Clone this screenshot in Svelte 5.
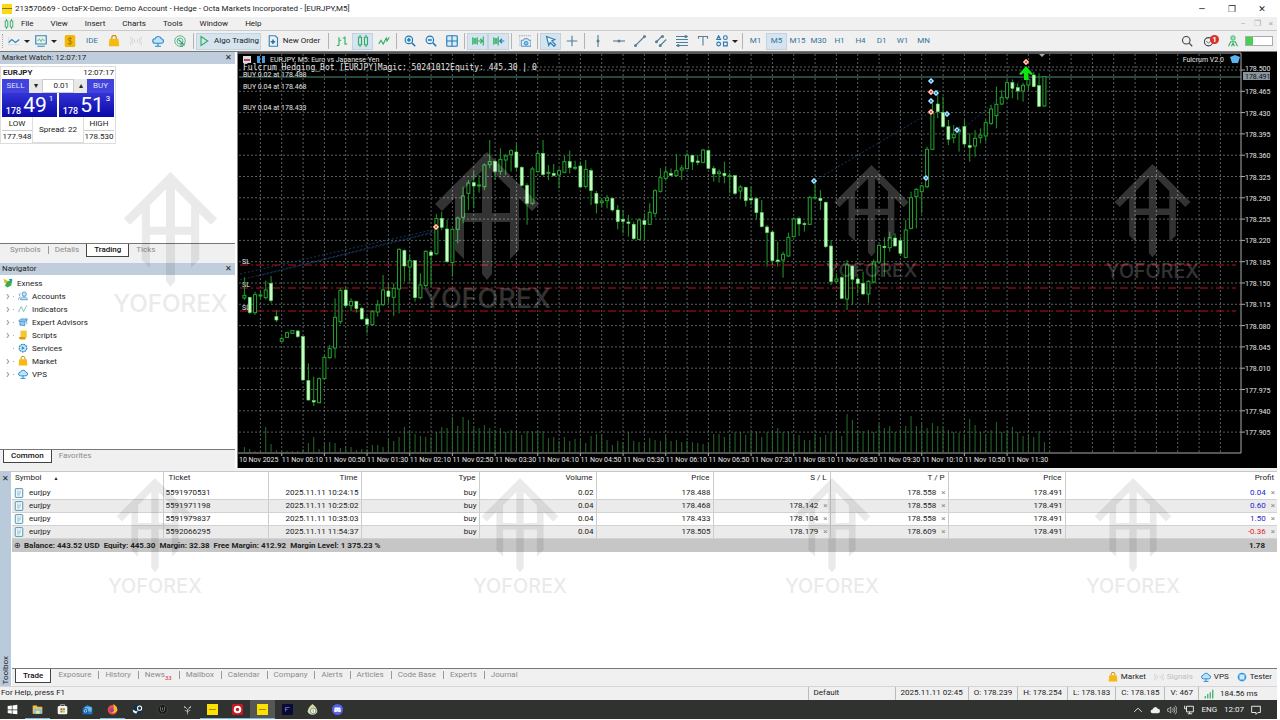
<script lang="ts">
  // Trading terminal: market watch, navigator, chart and trade toolbox.
  type Bar = [number, number, number, number, number];

  const menus = ['File', 'View', 'Insert', 'Charts', 'Tools', 'Window', 'Help'];
  const toolGroups = [
    ['algo'],
    ['bars', 'candles', 'line'],
    ['zoomin', 'zoomout', 'tile'],
    ['scroll', 'shift'],
    ['camera'],
    ['cursor', 'cross'],
  ];
  const drawTools = ['vline', 'hline', 'trend', 'channel', 'fibo', 'text'];
  const pressed = ['candles', 'scroll', 'shift', 'cursor'];
  const frames = ['M1', 'M5', 'M15', 'M30', 'H1', 'H4', 'D1', 'W1', 'MN'];

  const tree = [
    { name: 'Accounts', icon: 'people', open: true },
    { name: 'Indicators', icon: 'wave', open: true },
    { name: 'Expert Advisors', icon: 'hat', open: true },
    { name: 'Scripts', icon: 'script', open: true },
    { name: 'Services', icon: 'gear', open: false },
    { name: 'Market', icon: 'bag', open: true },
    { name: 'VPS', icon: 'cloud', open: true },
  ];

  const columns = [
    { name: 'Symbol', width: 151 },
    { name: 'Ticket', width: 105 },
    { name: 'Time', width: 93 },
    { name: 'Type', width: 118 },
    { name: 'Volume', width: 117 },
    { name: 'Price', width: 117 },
    { name: 'S / L', width: 117 },
    { name: 'T / P', width: 118 },
    { name: 'Price', width: 117 },
    { name: 'Profit', width: 212 },
  ];
  const trades = [
    { ticket: '5591970531', time: '2025.11.11 10:24:15', volume: '0.02', price: '178.488', sl: '', tp: '178.558', profit: '0.04' },
    { ticket: '5591971198', time: '2025.11.11 10:25:02', volume: '0.04', price: '178.468', sl: '178.142', tp: '178.558', profit: '0.60' },
    { ticket: '5591979837', time: '2025.11.11 10:35:03', volume: '0.04', price: '178.433', sl: '178.104', tp: '178.558', profit: '1.50' },
    { ticket: '5592066295', time: '2025.11.11 11:54:37', volume: '0.04', price: '178.505', sl: '178.179', tp: '178.609', profit: '-0.36' },
  ];
  const toolboxTabs = ['Trade', 'Exposure', 'History', 'News', 'Mailbox', 'Calendar', 'Company', 'Alerts', 'Articles', 'Code Base', 'Experts', 'Journal'];
  const quote = ['2025.11.11 02:45', 'O: 178.239', 'H: 178.254', 'L: 178.183', 'C: 178.185', 'V: 467'];
  const apps = ['windows', 'folder', 'store', 'mail', 'firefox', 'steam', 'hex', 'plant', 'exness', 'octa', 'exness', 'night', 'coin', 'discord'];
  const runningApps = [1, 4, 8, 9, 10];

  // Chart geometry: 5.33 units a bar, a grid line every 4 bars.
  const STEP = 16 / 3;
  const barX = (i: number) => 6.4 + i * STEP;
  const barY = (v: number) => 88 + v / 3;

  // high, body top, body bottom, low, 1 = rising
  const bars: Bar[] = [
    [412,466,474,480,1],[470,472,518,522,0],[455,464,518,525,1],[452,465,468,475,1],[422,450,473,478,1],[408,430,482,490,0],
    [512,530,540,546,0],[590,596,604,606,1],[575,578,592,594,1],[570,572,580,582,1],[570,573,590,594,0],[588,590,720,722,0],
    [670,722,780,782,0],[710,782,786,798,0],[712,716,788,790,1],[645,652,716,720,1],[615,626,653,656,1],[475,532,624,655,1],
    [445,451,545,552,1],[440,450,497,503,0],[475,484,497,514,1],[482,484,506,518,0],[500,505,537,540,0],[530,537,553,580,0],
    [510,515,554,556,1],[480,495,516,530,1],[405,450,494,498,1],[432,453,470,486,0],[430,445,472,528,1],[325,328,447,520,1],
    [328,332,378,425,0],[345,362,381,425,1],[360,362,473,485,0],[400,435,473,478,1],[330,334,437,445,1],[330,336,346,440,0],
    [222,236,341,345,1],[215,235,262,270,0],[240,267,365,368,0],[265,268,368,410,1],[230,234,268,310,1],[140,168,232,250,1],
    [120,129,160,210,1],[95,128,138,205,0],[105,135,138,158,1],[70,75,140,150,1],[0,65,74,85,1],[60,64,94,120,0],
    [25,58,94,105,1],[42,48,60,105,1],[28,32,44,95,1],[10,36,82,90,0],[78,82,136,140,0],[130,136,190,254,0],
    [80,87,190,195,1],[35,40,95,98,1],[0,40,104,108,0],[75,97,100,120,1],[72,100,106,110,0],[85,92,105,145,1],
    [48,65,97,100,1],[32,65,83,100,0],[62,82,85,90,1],[65,78,141,145,0],[60,88,139,145,1],[85,92,152,195,0],
    [153,160,190,220,0],[175,183,188,200,1],[165,174,182,205,1],[173,175,210,215,0],[195,210,245,268,0],[210,238,244,280,0],
    [225,246,250,290,0],[245,253,296,300,0],[235,240,298,300,1],[220,242,254,300,0],[190,217,253,255,1],[148,152,220,232,1],
    [85,113,154,158,1],[82,96,115,122,1],[85,100,106,108,0],[42,92,107,110,1],[75,84,90,120,1],[38,46,86,88,1],
    [44,46,66,90,0],[45,63,67,75,0],[27,30,67,70,1],[28,32,85,88,0],[78,86,102,125,0],[88,96,101,128,1],
    [65,100,107,130,0],[98,107,110,160,1],[105,107,160,165,0],[135,141,153,178,1],[140,142,182,200,0],[140,176,180,195,0],
    [173,176,218,238,0],[180,218,260,263,0],[255,261,278,380,0],[273,276,362,375,0],[305,360,364,380,0],[335,343,360,413,1],
    [278,292,348,350,1],[232,237,290,292,1],[230,236,252,288,0],[245,251,254,275,0],[168,173,253,255,1],[122,172,174,176,1],
    [150,175,182,210,0],[184,187,320,324,0],[300,318,425,435,0],[400,417,424,432,1],[408,413,475,478,0],[360,375,477,510,1],
    [375,378,418,495,0],[410,417,430,460,0],[395,430,462,466,0],[420,424,462,490,1],[358,366,426,430,1],[313,316,366,370,1],
    [292,319,323,410,0],[275,293,323,335,1],[280,294,318,320,0],[290,302,340,348,0],[240,270,352,355,1],[155,173,265,268,1],
    [145,148,170,265,1],[135,138,155,220,1],[20,28,140,145,1],[-120,-80,28,30,1],[-150,-108,-85,-65,0],[-130,-83,-40,-38,0],
    [-60,-40,-2,15,0],[-45,-16,-7,10,1],[-40,-30,-25,35,1],[-60,-40,12,20,0],[-20,17,22,65,0],[-30,-5,18,50,1],
    [-35,-15,-7,10,1],[-60,-52,-12,5,1],[-105,-93,-50,-45,1],[-160,-107,-73,-35,1],[-150,-128,-108,-105,1],[-180,-172,-127,-122,1],
    [-182,-172,-155,-125,0],[-170,-157,-147,-120,0],[-172,-164,-147,-115,1],[-190,-182,-165,-150,1],[-205,-195,-160,-158,0],
    [-200,-163,-101,-99,0],[-192,-190,-102,-100,1],
  ];
  const volumes = [
    5,3,1,2,25,8,2,1,1,1,1,3,9,15,3,9,10,9,4,5,5,2,3,3,7,7,5,14,11,15,25,20,18,16,15,15,20,25,24,35,26,35,32,26,24,27,24,22,
    24,20,22,20,17,21,21,21,21,14,15,11,15,11,13,12,9,16,18,18,12,7,11,10,20,11,10,9,14,12,11,16,11,12,10,11,10,9,8,10,18,18,
    15,18,20,20,17,20,21,15,20,20,24,20,21,18,17,12,12,18,15,17,20,20,16,38,32,22,21,22,20,28,24,26,20,23,26,36,26,28,24,29,
    26,25,22,20,19,17,33,27,20,18,22,30,20,21,25,20,16,17,15,21,10,
  ];
  const gridX = Array.from({ length: 46 }, (_, i) => 22.4 + i * 4 * STEP);
  const gridY = Array.from({ length: 18 }, (_, i) => 18 + i * 21.3);
  const prices = gridY.map((_, i) => (178.5 - i * 0.035).toFixed(3));
  const times = Array.from({ length: 18 }, (_, i) => {
    const min = 10 + i * 40;
    const pad = (n: number) => String(n).padStart(2, '0');
    return `11 Nov ${pad(Math.floor(min / 60))}:${pad(min % 60)}`;
  });
  const stops = [
    { y: 213, label: 'SL' },
    { y: 236, label: 'SL' },
    { y: 259, label: 'SL' },
  ];
  const deals = [
    { x: 198, y: 175, sell: true }, { x: 576, y: 129 }, { x: 688, y: 126 }, { x: 693, y: 29 }, { x: 693, y: 40, sell: true },
    { x: 698, y: 41 }, { x: 693, y: 49 }, { x: 693, y: 60, sell: true }, { x: 709, y: 62 }, { x: 719, y: 78 }, { x: 788, y: 10, sell: true },
  ];
</script>

{#snippet icon(name: string)}
  <svg class="icon" viewBox="0 0 16 16" aria-hidden="true">
    {#if name === 'chart'}
      <path d="M1 3v10h14" stroke="#c9d3da" /><path d="M1 10l4-4 5 4 5-4" stroke="#2f86b5" stroke-width="1.500" />
    {:else if name === 'monitor'}
      <path d="M1 1h14v11H1zM3 15h10" stroke="#2f86b5" stroke-width="1.500" /><path d="M3 7h2l1-2 2 4 2-4 1 2h2" stroke="#36b37a" />
    {:else if name === 'dollar'}
      <rect x="1" y="0" width="14" height="16" rx="2" fill="#f3b90a" /><path d="M10.500 5C9 3.500 5.500 4 5.500 6s5 1.500 5 4-4 2.500-5.500 1M8 2.500v11" stroke="#9b6800" />
    {:else if name === 'bag'}
      <path d="M5 6V3.500a3 3 0 016 0V6" stroke="#c48d00" stroke-width="1.500" /><path d="M2 5h12l1 10H1z" fill="#f5b912" />
    {:else if name === 'signal'}
      <path d="M4 4a6 6 0 000 8M12 4a6 6 0 010 8M1.500 2.500a9 9 0 000 11M14.500 2.500a9 9 0 010 11M6.500 6a3 3 0 000 4M9.500 6a3 3 0 010 4" stroke="#c3c7ca" />
    {:else if name === 'cloud'}
      <path d="M4 11a3 3 0 010-6 4.500 4.500 0 018.500 0A3 3 0 0112 11z" fill="#bfe3fa" stroke="#2688c9" stroke-width="1.500" /><path d="M8 11v4M4 15h8" stroke="#2688c9" stroke-width="1.500" />
    {:else if name === 'globe'}
      <circle cx="8" cy="8" r="7" stroke="#2ea36c" /><circle cx="8" cy="8" r="4" stroke="#2ea36c" /><path d="M8 8l6 6M8 12h6M8 15h4M8 8l-2-2" stroke="#2ea36c" stroke-width="1.500" />
    {:else if name === 'play'}
      <path d="M4 2l9 6-9 6z" stroke="#2eaf62" stroke-width="1.500" />
    {:else if name === 'order'}
      <path d="M3 1h8l3 3v11H3z" stroke="#2f86b5" stroke-width="1.500" /><path d="M8 6v6M5 9h6" stroke="#1d6fae" stroke-width="2" />
    {:else if name === 'bars'}
      <path d="M4 3v11M1 14h3M4 7h3M12 2v11M9 4h3M12 12h3" stroke="#2eaf62" stroke-width="1.500" />
    {:else if name === 'candles'}
      <path d="M2 3h4v10H2zM10 3h4v10h-4zM4 0v3M4 13v3M12 0v3M12 13v3" stroke="#2eaf62" stroke-width="1.500" />
    {:else if name === 'line'}
      <path d="M1 12l3-5 3 5 4-8 1 4 3-5" stroke="#2eaf62" stroke-width="1.500" />
    {:else if name === 'zoomin'}
      <circle cx="6.500" cy="6.500" r="5" fill="#d8ecfa" stroke="#2678b5" stroke-width="1.500" /><path d="M10.500 10.500L15 15M4 6.500h5M6.500 4v5" stroke="#2678b5" stroke-width="2" />
    {:else if name === 'zoomout'}
      <circle cx="6.500" cy="6.500" r="5" fill="#d8ecfa" stroke="#2678b5" stroke-width="1.500" /><path d="M10.500 10.500L15 15M4 6.500h5" stroke="#2678b5" stroke-width="2" />
    {:else if name === 'tile'}
      <rect x="1" y="1" width="14" height="14" rx="1" fill="#d8ecfa" stroke="#2678b5" stroke-width="1.500" /><path d="M8 1v14M1 8h14" stroke="#2678b5" stroke-width="1.500" />
    {:else if name === 'scroll'}
      <path d="M1 3v10M3 5h2v6H3zM7 3v10M15 2v12" stroke="#2eaf62" stroke-width="1.500" /><path d="M8 8h6M11 5l3 3-3 3" stroke="#2eaf62" stroke-width="1.500" />
    {:else if name === 'shift'}
      <path d="M1 3v10M3 5h2v6H3zM7 2v12" stroke="#2eaf62" stroke-width="1.500" /><path d="M15 8H9M12 5L9 8l3 3" stroke="#2678b5" stroke-width="1.500" />
    {:else if name === 'camera'}
      <path d="M0 1h16M0 1v14" stroke="#8d959b" stroke-dasharray="2 1" /><path d="M3 7h3l1-2h5l1 2h3v8H3z" fill="#d8ecfa" stroke="#2678b5" /><circle cx="9.500" cy="11" r="2.500" fill="#8cc6ee" stroke="#2678b5" />
    {:else if name === 'cursor'}
      <path d="M2 2l11 4-4 2 5 5-2 2-5-5-2 4z" fill="#eef7fd" stroke="#2678b5" stroke-width="1.500" />
    {:else if name === 'cross'}
      <path d="M8 1v14M1 8h14" stroke="#4b7f9c" stroke-width="1.500" />
    {:else if name === 'vline'}
      <path d="M8 0v16" stroke="#5c7f93" stroke-width="1.500" /><circle cx="8" cy="8" r="2" fill="#5c7f93" />
    {:else if name === 'hline'}
      <path d="M0 8h16" stroke="#5c7f93" stroke-width="1.500" /><circle cx="8" cy="8" r="2" fill="#5c7f93" />
    {:else if name === 'trend'}
      <path d="M2 14L14 2" stroke="#5c7f93" stroke-width="1.500" /><circle cx="2" cy="14" r="2" fill="#5c7f93" /><circle cx="14" cy="2" r="2" fill="#5c7f93" />
    {:else if name === 'channel'}
      <path d="M1 10L10 1M6 15l9-9" stroke="#5c7f93" stroke-width="1.500" /><circle cx="2" cy="9" r="2" fill="#5c7f93" /><circle cx="7" cy="14" r="2" fill="#5c7f93" /><circle cx="10" cy="2" r="2" fill="#5c7f93" />
    {:else if name === 'fibo'}
      <path d="M0 2h16M0 6h16M0 10h16M0 14h16" stroke="#4b7f9c" stroke-width="1.500" /><circle cx="3" cy="14" r="2" fill="#5c7f93" /><circle cx="13" cy="2" r="2" fill="#5c7f93" />
    {:else if name === 'text'}
      <path d="M2 5V2h12v3M8 2v12" stroke="#5c7f93" stroke-width="1.500" />
    {:else if name === 'shapes'}
      <path d="M3.500 1L6 6H1zM10 9.500h5v5h-5z" stroke="#2678b5" stroke-width="1.500" /><circle cx="3.500" cy="12" r="2.500" stroke="#2678b5" stroke-width="1.500" /><circle cx="12.500" cy="3.500" r="2.500" stroke="#2678b5" stroke-width="1.500" />
    {:else if name === 'people'}
      <circle cx="10" cy="5" r="3.500" fill="#bfe3fa" stroke="#2678b5" /><path d="M4 14c0-6 11-6 11 0z" fill="#bfe3fa" stroke="#2678b5" /><path d="M1 14c0-3 1-4 3-4M4 4a2 2 0 100 4" stroke="#2678b5" />
    {:else if name === 'wave'}
      <path d="M1 13l4-9 4 8 5-10" stroke="#36a98a" />
    {:else if name === 'hat'}
      <path d="M1 6l4-3h10l-3 4H2zM3 7v6l8 1V8M14 4v7" fill="#8cccf2" stroke="#2678b5" />
    {:else if name === 'script'}
      <path d="M4 1h10v11H4z" fill="#f7c52c" /><path d="M1 11h11v4H3z" fill="#d99b08" />
    {:else if name === 'gear'}
      <circle cx="8" cy="8" r="6" fill="#d2ecfb" stroke="#2688c9" stroke-width="2" stroke-dasharray="3 1" /><path d="M6 5l5 3-5 3z" fill="#2688c9" />
    {:else if name === 'doc'}
      <rect x="2" y="1" width="12" height="14" rx="1" fill="#eef8fd" stroke="#4b91ad" stroke-width="1.500" /><path d="M5 5h2M9 5h2M5 8h6M5 11h4" stroke="#4b91ad" />
    {:else if name === 'tester'}
      <circle cx="8" cy="8" r="7" fill="#2f9bdc" /><rect x="4" y="4" width="8" height="8" rx="1" fill="#cdeafb" />
    {:else if name === 'search'}
      <circle cx="7" cy="7" r="5" stroke="#444" stroke-width="1.500" /><path d="M11 11l4 4" stroke="#444" stroke-width="1.500" />
    {:else if name === 'bell'}
      <circle cx="6" cy="9" r="5.500" stroke="#444" stroke-width="1.500" /><path d="M3 8l3 3 3-3" stroke="#444" />
    {:else if name === 'person'}
      <circle cx="8" cy="4" r="3" fill="#9be0b3" stroke="#2eaf62" /><path d="M2 15l3-6h6l3 6M6 15l2-4 2 4" stroke="#2eaf62" stroke-width="1.500" />
    {:else if name === 'windows'}
      <path d="M1 3l6-1v6H1zM8 2l7-1v7H8zM1 9h6v5l-6-1zM8 9h7v6l-7-1z" fill="#fff" />
    {:else if name === 'folder'}
      <path d="M1 2h6l1 2h7v10H1z" fill="#f2c14a" /><path d="M3 7h11v7H3z" fill="#7fc6e8" /><path d="M6 10h5v4H6z" fill="#f8e3a1" />
    {:else if name === 'store'}
      <rect x="1" y="3" width="14" height="12" rx="2" fill="#f4f4f0" /><path d="M5 3V1h6v2" stroke="#ddd" /><path d="M5 6h3v3H5z" fill="#e25a3c" /><path d="M8.500 6h3v3h-3zM5 9.500h3v3H5z" fill="#64a844" /><path d="M8.500 9.500h3v3h-3z" fill="#efb62e" />
    {:else if name === 'mail'}
      <path d="M1 6l7-5 7 5v9H1z" fill="#1f78c8" /><path d="M4 4h10v7H4z" fill="#6cb9ef" /><circle cx="5" cy="10" r="4" fill="#0c5daa" /><circle cx="5" cy="10" r="2" stroke="#fff" />
    {:else if name === 'firefox'}
      <circle cx="8" cy="8.500" r="7" fill="#ef4a38" /><path d="M9 0c5 3 6 5 6 9-2 5-8 5-10 2 4 0 6-3 4-11z" fill="#fdb62f" /><circle cx="7" cy="9" r="3" fill="#8a3fc0" />
    {:else if name === 'steam'}
      <circle cx="8" cy="8" r="7" fill="#16324a" /><circle cx="11" cy="6" r="3" stroke="#fff" stroke-width="1.500" /><path d="M1 8l5 3 3-2-3 5-4-2z" fill="#fff" />
    {:else if name === 'hex'}
      <circle cx="8" cy="8" r="7" fill="#161616" stroke="#555" /><path d="M5 4v5l3 3 3-3V4M8 5v4" stroke="#999" />
    {:else if name === 'plant'}
      <path d="M8 15V8L3 3M8 9l5-6M4 9l4 2 4-2M3 5h3M10 5h3" stroke="#d6d6d6" />
    {:else if name === 'exness'}
      <rect width="16" height="16" fill="#fde100" /><path d="M3 8h10" stroke="#6d6100" />
    {:else if name === 'octa'}
      <rect width="16" height="16" rx="2" fill="#c91820" /><circle cx="8" cy="8" r="4" stroke="#fff" stroke-width="3" />
    {:else if name === 'night'}
      <rect width="16" height="16" rx="1" fill="#090a35" /><path d="M5 11V5h6M5 8h3" stroke="#8991d4" />
    {:else if name === 'coin'}
      <path d="M8 0c4 3 7 7 7 11 0 6-14 6-14 0C1 7 4 3 8 0z" fill="#ddd9a4" /><circle cx="9" cy="10" r="4" fill="#f7f7ef" stroke="#467f69" /><path d="M9 8v4" stroke="#467f69" />
    {:else if name === 'discord'}
      <circle cx="8" cy="8" r="8" fill="#5662ea" /><path d="M4 5h8l1 6-3 1-1-1H7l-1 1-3-1z" fill="#fff" /><path d="M6 8v1M10 8v1" stroke="#5662ea" stroke-width="1.500" />
    {:else if name === 'up'}
      <path d="M2 11l6-6 6 6" stroke="#eee" stroke-width="1.500" />
    {:else if name === 'weather'}
      <path d="M4 13a3 3 0 010-6 4.500 4.500 0 018.500-1 3.500 3.500 0 010 7z" fill="#eee" />
    {:else if name === 'sound'}
      <path d="M1 6h2l3-3v10l-3-3H1zM9 5a5 5 0 010 6M11 3a8 8 0 010 10M13 1a11 11 0 010 14" stroke="#eee" />
    {:else if name === 'network'}
      <path d="M4 2h11v9H4zM9 11v3M6 14h7M1 1v5h3" stroke="#eee" stroke-width="1.500" />
    {:else if name === 'note'}
      <path d="M1 2h14v10h-4l-3 3v-3H1z" stroke="#eee" stroke-width="1.500" />
    {/if}
  </svg>
{/snippet}

{#snippet watermark(place: string)}
  <svg class="mark {place}" viewBox="-6 0 144 168" aria-hidden="true">
    <path d="M66 0l52 52-7 7-13-13v52l-9 9V37L71 19v42h18v9H71v52l-5 6-5-6V70H43v-9h18V19L43 37v70l-9-9V46L21 59l-7-7z" />
    <text x="66" y="156" text-anchor="middle">YOFOREX</text>
  </svg>
{/snippet}

<div class="terminal">
  <header class="title">
    <span class="logo"></span>
    <h1>213570669 - OctaFX-Demo: Demo Account - Hedge - Octa Markets Incorporated - [EURJPY,M5]</h1>
    <div class="window-buttons">
      <button aria-label="Minimize">─</button>
      <button aria-label="Restore">❐</button>
      <button aria-label="Close">✕</button>
    </div>
  </header>

  <nav class="menu">
    {@render icon('candles')}
    {#each menus as item (item)}
      <button>{item}</button>
    {/each}
    <div class="child-buttons"><span>–</span><span>❐</span><span>×</span></div>
  </nav>

  <div class="toolbar">
    <span class="grip"></span>
    <button class="tool drop" aria-label="Chart type">{@render icon('chart')}<i></i></button>
    <button class="tool drop" aria-label="Templates">{@render icon('monitor')}<i></i></button>
    <button class="tool app" aria-label="Deposit">{@render icon('dollar')}</button>
    <button class="tool app ide">IDE</button>
    {#each ['bag', 'signal', 'cloud', 'globe'] as name (name)}
      <button class="tool app" aria-label={name}>{@render icon(name)}</button>
    {/each}
    {#each toolGroups as group, g (g)}
      <span class="sep"></span>
      {#each group as name (name)}
        {#if name === 'algo'}
          <button class="tool label on">{@render icon('play')}Algo Trading</button>
          <button class="tool label">{@render icon('order')}New Order</button>
        {:else}
          <button class="tool" class:on={pressed.includes(name)} aria-label={name}>{@render icon(name)}</button>
        {/if}
      {/each}
    {/each}
    <span class="sep"></span>
    {#each drawTools as name (name)}
      <button class="tool" aria-label={name}>{@render icon(name)}</button>
    {/each}
    <button class="tool drop" aria-label="Objects">{@render icon('shapes')}<i></i></button>
    <span class="sep"></span>
    {#each frames as frame (frame)}
      <button class="tool frame" class:on={frame === 'M5'}>{frame}</button>
    {/each}
    <div class="tool-end">
      <button class="tool" aria-label="Search">{@render icon('search')}</button>
      <button class="tool alert" aria-label="Notifications">{@render icon('bell')}<b>1</b></button>
      <button class="tool" aria-label="Account">{@render icon('person')}</button>
      <span class="battery"></span>
    </div>
  </div>

  <main class="work">
    <aside class="side">
      <section class="watch">
        <div class="pane-head"><h2>Market Watch: 12:07:17</h2><button aria-label="Close market watch">✕</button></div>
        <div class="ticket">
          <div class="ticket-head"><b>EURJPY</b><span>12:07:17</span></div>
          <div class="lot">
            <button class="deal">SELL</button>
            <button class="spin" aria-label="Less">▾</button>
            <input aria-label="Volume" value="0.01" />
            <button class="spin" aria-label="More">▴</button>
            <button class="deal">BUY</button>
          </div>
          <div class="quotes">
            <div class="quote"><small>178</small><strong>49</strong><sup>1</sup></div>
            <div class="quote"><small>178</small><strong>51</strong><sup>3</sup></div>
          </div>
          <div class="range">
            <div><span>LOW</span><span>177.948</span></div>
            <div class="spread">Spread: 22</div>
            <div><span>HIGH</span><span>178.530</span></div>
          </div>
        </div>
        <div class="tabs">
          <button>Symbols</button><button>Details</button><button class="active">Trading</button><button>Ticks</button>
        </div>
      </section>
      <section class="navigator">
        <div class="pane-head"><h2>Navigator</h2><button aria-label="Close navigator">✕</button></div>
        <ul class="tree">
          <li class="root">
            <svg class="icon" viewBox="0 0 16 16" aria-hidden="true">
              <path d="M1 1l6 3v6L2 7z" fill="#e9bd20" /><path d="M7 5l8-2-2 9-6 3-4-3z" fill="#35ae4d" /><path d="M9 2l6-1-2 5z" fill="#2583c4" />
            </svg>
            Exness
          </li>
          {#each tree as node (node.name)}
            <li><span class="chevron">{node.open ? '›' : ''}</span><span class="dash"></span>{@render icon(node.icon)}{node.name}</li>
          {/each}
        </ul>
        <div class="tabs"><button class="active">Common</button><button>Favorites</button></div>
      </section>
      {@render watermark('in-side')}
    </aside>

    <section class="chart">
      <svg class="plot" viewBox="0 0 1039 415" preserveAspectRatio="xMinYMin meet" role="img" aria-label="EURJPY, M5">
        <g class="grid">
          {#each gridX as x (x)}<path d="M{x} 2V400" />{/each}
          {#each gridY as y (y)}<path d="M1 {y}H1003" />{/each}
          <path d="M290 15H1003" />
        </g>
        <g class="stops">
          {#each stops as stop (stop.y)}
            <path d="M2 {stop.y}H998" />
            <text x="4" y={stop.y - 1}>{stop.label}</text>
          {/each}
        </g>
        <g class="links">
          <path d="M2 228L198 179M2 222L198 177M20 224L198 180M576 129L693 60M709 90L788 24" />
        </g>
        <g class="volumes">
          {#each volumes as v, i (i)}<path d="M{barX(i)} 400v{-v}" />{/each}
        </g>
        <path class="bid" d="M1 25H1003" />
        {#each bars as [high, top, bottom, low, up], i (i)}
          <g class="bar" class:up={up === 1}>
            <path d="M{barX(i)} {barY(high)}V{barY(top)}M{barX(i)} {barY(bottom)}V{barY(low)}" />
            <rect x={barX(i) - 1.5} y={barY(top)} width="3" height={(bottom - top) / 3} />
          </g>
        {/each}
        <path class="arrow" d="M788 14l7 8-2 1-3-2v7h-4v-7l-3 2-2-1z" />
        {#each deals as deal, i (i)}
          <g class="mark-deal" class:sell={deal.sell}>
            <path d="M{deal.x} {deal.y - 3}l3 3-3 3-3-3z" /><circle cx={deal.x} cy={deal.y} r="1" />
          </g>
        {/each}
        <g class="axis">
          <path d="M0 1H1003V401H0" />
          {#each prices as price, i (price)}
            <path d="M1003 {gridY[i]}h4" /><text x="1007" y={gridY[i] + (i === 0 ? 1 : 3)}>{price}</text>
          {/each}
          <rect x="1005" y="20" width="27" height="8" />
          <text class="last" x="1007" y="27">178.491</text>
          <text x="1" y="410">10 Nov 2025</text>
          {#each times as time, i (time)}
            <path d="M{gridX[i * 2 + 1]} 401v3" /><text x={gridX[i * 2 + 1]} y="410">{time}</text>
          {/each}
        </g>
        <g class="notes">
          <rect x="5" y="4" width="8" height="7" fill="#d6dce8" /><rect x="6" y="7" width="6" height="2" fill="#d23b43" />
          <path d="M19 4h3v7h-3zM24 4h3v7h-3z" fill="#4e9bdd" />
          <text x="32" y="10">EURJPY, M5: Euro vs Japanese Yen</text>
          <text x="5" y="25">BUY 0.02 at 178.488</text>
          <text x="5" y="37">BUY 0.04 at 178.468</text>
          <text x="5" y="58">BUY 0.04 at 178.433</text>
          <text class="mono" x="5" y="18">Fulcrum Hedging_Bot [EURJPY]Magic: 50241012Equity: 445.30 | 0</text>
          <text x="986" y="10" text-anchor="end">Fulcrum V2.0</text>
          <path d="M992 5l5-2 5 2-2 6h-6z" fill="#58b5f0" />
          <path d="M801 2h6l-3 3z" fill="#aaa" />
        </g>
      </svg>
      {@render watermark('big dark')}
      {@render watermark('mid dark')}
      {@render watermark('far dark')}
    </section>
  </main>

  <section class="toolbox">
    <div class="toolbox-strip"><button aria-label="Close toolbox">✕</button><span>Toolbox</span></div>
    <div class="toolbox-body">
      <table>
        <colgroup>
          {#each columns as column, i (i)}<col style="width: {column.width}px" />{/each}
        </colgroup>
        <thead>
          <tr>
            {#each columns as column, i (i)}<th>{column.name}{#if i === 0}<i class="sort">▲</i>{/if}</th>{/each}
          </tr>
        </thead>
        <tbody>
          {#each trades as trade (trade.ticket)}
            <tr>
              <td>{@render icon('doc')}eurjpy</td>
              <td>{trade.ticket}</td>
              <td>{trade.time}</td>
              <td>buy</td>
              <td>{trade.volume}</td>
              <td>{trade.price}</td>
              <td>{#if trade.sl}{trade.sl}<button class="clear" aria-label="Remove stop loss">×</button>{/if}</td>
              <td>{trade.tp}<button class="clear" aria-label="Remove take profit">×</button></td>
              <td>178.491</td>
              <td class="profit" class:loss={trade.profit.startsWith('-')}>{trade.profit}<button class="clear" aria-label="Close position">×</button></td>
            </tr>
          {/each}
        </tbody>
        <tfoot>
          <tr>
            <td colspan="9"><span class="plus">⊕</span>Balance: 443.52 USD&nbsp; Equity: 445.30&nbsp; Margin: 32.38&nbsp; Free Margin: 412.92&nbsp; Margin Level: 1 375.23 %</td>
            <td class="total">1.78</td>
          </tr>
        </tfoot>
      </table>
      <div class="tabs">
        {#each toolboxTabs as tab, i (tab)}
          <button class:active={i === 0}>{tab}{#if tab === 'News'}<sub>33</sub>{/if}</button>
        {/each}
        <div class="services">
          <button>{@render icon('bag')}Market</button>
          <button class="off">{@render icon('signal')}Signals</button>
          <button>{@render icon('cloud')}VPS</button>
          <button>{@render icon('tester')}Tester</button>
        </div>
      </div>
    </div>
    {@render watermark('row one')}
    {@render watermark('row two')}
    {@render watermark('row three')}
    {@render watermark('row four')}
  </section>

  <footer class="status">
    <span class="help">For Help, press F1</span>
    <span class="profile">Default</span>
    {#each quote as part (part)}<span>{part}</span>{/each}
    <span class="ping"><svg class="icon" viewBox="0 0 16 16" aria-hidden="true"><path d="M2 15v-4M6 15V8M10 15V5M14 15V1" stroke="#35b069" stroke-width="2" /></svg>184.56 ms</span>
  </footer>

  <div class="taskbar">
    {#each apps as app, i (i)}
      <button class:running={runningApps.includes(i)} class:current={i === 10} aria-label={app}>{@render icon(app)}</button>
    {/each}
    <div class="tray">
      {#each ['up', 'weather', 'sound', 'network'] as name (name)}{@render icon(name)}{/each}
      <span>ENG</span>
      <time>12:07</time>
      {@render icon('note')}
    </div>
  </div>
</div>

<style>
  :global(body) {
    background: #fff;
  }

  .terminal {
    display: flex;
    flex-direction: column;
    box-sizing: border-box;
    min-height: 100vh;
    padding: 0 3px 1px 0;
    font-family: Roboto, 'Open Sans', sans-serif;
    font-size: 8px;
    line-height: 12px;
    color: #222;
    background: #fff;
  }

  button,
  input {
    font: inherit;
    color: inherit;
    border: 0;
    padding: 0;
    margin: 0;
    background: none;
    border-radius: 0;
  }

  h1,
  h2 {
    margin: 0;
    font-size: 8px;
    font-weight: 400;
  }

  .icon {
    width: 10px;
    height: 10px;
    flex: none;
    fill: none;
  }

  .title {
    display: flex;
    align-items: center;
    gap: 3px;
    height: 17px;
    padding-left: 2px;
  }

  .logo {
    width: 10px;
    height: 10px;
    background: linear-gradient(#fbd914 45%, #8a7600 45% 55%, #fbd914 55%);
  }

  .window-buttons {
    display: flex;
    margin-left: auto;
  }

  .window-buttons button {
    width: 30px;
    font-family: 'DejaVu Sans', sans-serif;
    font-size: 9px;
  }

  .menu {
    display: flex;
    align-items: center;
    gap: 17px;
    height: 13px;
    padding-left: 4px;
    background: #f0f0f0;
    border-bottom: 1px solid #c9cbcb;
  }

  .menu > .icon {
    margin-right: -10px;
  }

  .child-buttons {
    display: flex;
    gap: 8px;
    margin-left: auto;
    padding-right: 4px;
    color: #aaa;
  }

  .toolbar {
    display: flex;
    align-items: center;
    height: 20px;
    background: #f0f0f0;
    border-bottom: 1px solid #777;
  }

  .grip {
    width: 3px;
    height: 14px;
    margin-right: 2px;
    border-right: 1px dotted #aaa;
    box-sizing: border-box;
  }

  .tool {
    display: flex;
    align-items: center;
    justify-content: center;
    flex: none;
    width: 21px;
    height: 17px;
    box-sizing: border-box;
  }

  .tool .icon {
    width: 12px;
    height: 12px;
  }

  .tool.app {
    width: 22px;
  }

  .tool.drop {
    width: 27px;
    gap: 4px;
  }

  .tool.drop i {
    border: 3px solid transparent;
    border-top-color: #222;
    border-bottom: 0;
  }

  .tool.label {
    width: 65px;
    gap: 4px;
    white-space: nowrap;
  }

  .tool.ide,
  .tool.frame {
    color: #31769b;
  }

  .tool.on {
    background: #d5e4ef;
    border: 1px solid #c2d3df;
  }

  .sep {
    flex: none;
    width: 1px;
    height: 16px;
    margin: 0 2px;
    background: #b4b4b4;
  }

  .tool-end {
    display: flex;
    align-items: center;
    gap: 2px;
    margin-left: auto;
    padding-right: 4px;
  }

  .alert {
    position: relative;
  }

  .alert b {
    position: absolute;
    top: 2px;
    right: 1px;
    width: 9px;
    height: 9px;
    line-height: 9px;
    border-radius: 50%;
    color: #fff;
    background: #d9302c;
  }

  .battery {
    width: 28px;
    height: 10px;
    box-sizing: border-box;
    border: 1px solid #aaa;
    background: linear-gradient(90deg, #48cf50 28%, #fff 28%);
  }

  .work {
    display: flex;
    flex: 416 1 0;
    min-height: 416px;
  }

  .side {
    position: relative;
    display: flex;
    flex-direction: column;
    gap: 5px;
    width: 235px;
    padding-bottom: 4px;
    background: #f0f0f0;
  }

  .watch,
  .navigator {
    display: flex;
    flex-direction: column;
    flex: 201 1 0;
    background: #fff;
  }

  .watch {
    flex-grow: 205;
  }

  .pane-head {
    display: flex;
    align-items: center;
    justify-content: space-between;
    height: 12px;
    padding: 0 3px 0 2px;
    background: #bfcddc;
  }

  .ticket {
    width: 116px;
    margin-top: 2px;
    padding: 0 1px;
    box-sizing: border-box;
    border: 1px solid #ddd;
  }

  .ticket-head {
    display: flex;
    justify-content: space-between;
    padding-left: 1px;
  }

  .lot {
    display: flex;
    height: 14px;
    background: #eee;
  }

  .lot input {
    flex: 1;
    min-width: 0;
    text-align: right;
    padding-right: 4px;
    background: #fff;
    border: 1px solid #ccc;
  }

  .deal {
    width: 27px;
    color: #dfe1ff;
    background: #4242dc;
  }

  .spin {
    width: 13px;
    background: #e8e8e8;
  }

  .quotes {
    display: flex;
    gap: 2px;
  }

  .quote {
    display: flex;
    flex: 1;
    justify-content: center;
    align-items: flex-end;
    height: 24px;
    color: #fff;
    background: linear-gradient(#3434d6, #0808a8);
  }

  .quote small {
    font-size: 9px;
    font-weight: 500;
  }

  .quote strong {
    font-size: 21px;
    font-weight: 400;
    line-height: 23px;
    margin: 0 2px;
  }

  .quote sup {
    font-size: 8px;
    align-self: flex-start;
  }

  .range {
    display: flex;
    justify-content: space-between;
    text-align: center;
  }

  .range div {
    display: flex;
    flex-direction: column;
    width: 30px;
    padding-top: 1px;
  }

  .range div span + span {
    border-top: 1px solid #ccc;
  }

  .range .spread {
    flex: 1;
    justify-content: center;
    border: 1px solid #ddd;
    border-top: 0;
  }

  .tabs {
    display: flex;
    align-items: flex-start;
    height: 14px;
    margin-top: auto;
    padding-left: 3px;
    color: #8b8b8b;
    background: #f0f0f0;
    border-top: 1px solid #777;
  }

  .tabs > button {
    position: relative;
    padding: 0 7px;
    line-height: 12px;
  }

  .tabs > button:not(.active) + button:not(.active)::before {
    content: '';
    position: absolute;
    left: 0;
    top: 2px;
    height: 8px;
    border-left: 1px solid #999;
  }

  .tabs > .active {
    color: #111;
    font-weight: 500;
    background: #fff;
    border: 1px solid #444;
    border-top: 0;
  }

  .tree {
    flex: 1;
    margin: 0;
    padding: 2px 0 0;
    list-style: none;
  }

  .tree li {
    display: flex;
    align-items: center;
    gap: 4px;
    height: 13px;
    padding-left: 6px;
    line-height: 13px;
  }

  .tree .root {
    padding-left: 3px;
  }

  .chevron {
    width: 3px;
    font-size: 12px;
    color: #888;
  }

  .dash {
    width: 1px;
    border-top: 1px dotted #aaa;
  }

  .chart {
    position: relative;
    flex: 1;
    margin-left: 2px;
    min-width: 0;
    background: #000;
    border-left: 1px solid #888;
  }

  .plot {
    display: block;
    width: 100%;
    fill: none;
  }

  .plot text {
    font-size: 7px;
    fill: #e6e6e6;
  }

  .grid path {
    stroke: #70787a;
    stroke-dasharray: 2 2;
    stroke-width: 0.8;
  }

  .stops path {
    stroke: #b5141e;
    stroke-dasharray: 8 3 2 3;
  }

  .links path {
    stroke: #234d86;
    stroke-width: 0.7;
    stroke-dasharray: 2 2;
  }

  .volumes path {
    stroke: #236b2b;
  }

  .bid {
    stroke: #4a8f78;
  }

  .bar path {
    stroke: #1d9b27;
  }

  .bar rect {
    fill: #c5fbc5;
    stroke: #5ade62;
    stroke-width: 0.6;
  }

  .bar.up rect {
    fill: #000;
    stroke: #22a82d;
    stroke-width: 1;
  }

  .arrow {
    fill: #0be60b;
  }

  .mark-deal path {
    fill: #bfe2f7;
    stroke: #4f93bf;
  }

  .mark-deal circle {
    fill: #1b6fb0;
  }

  .mark-deal.sell path {
    fill: #ffd8c4;
    stroke: #e0775a;
  }

  .mark-deal.sell circle {
    fill: #d2391d;
  }

  .axis path {
    stroke: #aaa;
  }

  .axis rect {
    fill: #8995a0;
  }

  .plot .last {
    fill: #111;
  }

  .plot .mono {
    font-family: 'DejaVu Sans Mono', monospace;
    font-size: 8px;
  }

  .mark {
    position: absolute;
    pointer-events: none;
    fill: #000;
    opacity: 0.08;
  }

  .mark text {
    font-family: Inter, sans-serif;
    font-size: 27px;
    font-weight: 500;
  }

  .mark.dark {
    fill: #fff;
    opacity: 0.2;
  }

  .in-side {
    left: 106px;
    top: 120px;
    width: 129px;
  }

  .big {
    left: 17%;
    top: 100px;
    width: 144px;
  }

  .mid {
    left: 56%;
    top: 113px;
    width: 103px;
  }

  .far {
    left: 83%;
    top: 112px;
    width: 105px;
  }

  .row {
    top: 6px;
    width: 106px;
  }

  .one {
    left: 8%;
  }

  .two {
    left: 36.6%;
  }

  .three {
    left: 61%;
  }

  .four {
    left: 84.6%;
  }

  .toolbox {
    position: relative;
    display: flex;
    flex: 217 1 0;
    margin-top: 3px;
    border-top: 1px solid #c8c8c8;
    box-shadow: 0 -3px #f0f0f0;
  }

  .toolbox-strip {
    display: flex;
    flex-direction: column;
    justify-content: space-between;
    align-items: center;
    width: 11px;
    padding: 1px 0 2px;
    box-sizing: border-box;
    background: #b9cbdb;
  }

  .toolbox-strip span {
    writing-mode: vertical-rl;
    transform: rotate(180deg);
    line-height: 11px;
  }

  .toolbox-body {
    display: flex;
    flex-direction: column;
    flex: 1;
    min-width: 0;
    padding-left: 1px;
  }

  table {
    width: 100%;
    table-layout: fixed;
    border-collapse: collapse;
  }

  th {
    height: 12px;
    padding: 0 3px 3px;
    font-weight: 400;
    text-align: right;
    border-right: 1px solid #ccc;
  }

  td {
    height: 12px;
    padding: 0 2px;
    line-height: 12px;
    text-align: right;
    white-space: nowrap;
    border-right: 1px solid #ccc;
    border-bottom: 1px solid #d2d2d2;
  }

  th:first-child,
  th:nth-child(2),
  td:first-child,
  td:nth-child(2) {
    text-align: left;
  }

  th:nth-child(2) {
    padding-left: 5px;
  }

  th:last-child,
  td:last-child {
    border-right: 0;
  }

  tbody tr:nth-child(even) {
    background: #ebebeb;
  }

  td .icon {
    margin: 0 5px 0 0;
    vertical-align: middle;
  }

  .sort {
    margin-left: 12px;
    font-size: 5px;
    font-style: normal;
  }

  .clear {
    margin-left: 5px;
    color: #888;
  }

  .profit {
    color: #2424d0;
  }

  .profit.loss {
    color: #e02424;
  }

  tfoot td {
    height: 13px;
    font-weight: 700;
    background: #c6c6c6;
    border: 0;
  }

  .plus {
    margin-right: 3px;
    font-weight: 400;
  }

  tfoot .total {
    text-align: right;
    padding-right: 12px;
  }

  .toolbox-body .tabs {
    height: 17px;
  }

  .toolbox-body .active {
    height: 14px;
  }

  sub {
    font-size: 6px;
    line-height: 6px;
    color: #e02440;
  }

  .services {
    display: flex;
    gap: 8px;
    margin-left: auto;
    padding: 2px 5px 0 0;
    color: #222;
  }

  .services button {
    display: flex;
    align-items: center;
    gap: 3px;
  }

  .services .off {
    color: #c0c0c0;
  }

  .status {
    display: flex;
    height: 13px;
    background: #f0f0f0;
    border-top: 1px solid #d5d5d5;
  }

  .status span {
    padding: 0 5px;
    border-left: 1px solid #bbb;
  }

  .status .help {
    flex: 1;
    padding-left: 1px;
    border: 0;
  }

  .status .profile {
    width: 76px;
  }

  .status .ping {
    display: flex;
    align-items: center;
    gap: 6px;
    width: 68px;
  }

  .taskbar {
    display: flex;
    height: 19px;
    background: #30322f;
  }

  .taskbar > button {
    display: flex;
    align-items: center;
    justify-content: center;
    box-sizing: border-box;
    width: 25px;
    padding-top: 1px;
    border-bottom: 1px solid transparent;
  }

  .taskbar > button .icon {
    width: 11px;
    height: 11px;
  }

  .taskbar .running {
    border-bottom-color: #76b9e6;
  }

  .taskbar .current {
    background: #555754;
  }

  .tray {
    display: flex;
    align-items: center;
    gap: 7px;
    margin-left: auto;
    padding-right: 16px;
    color: #eee;
  }
</style>
